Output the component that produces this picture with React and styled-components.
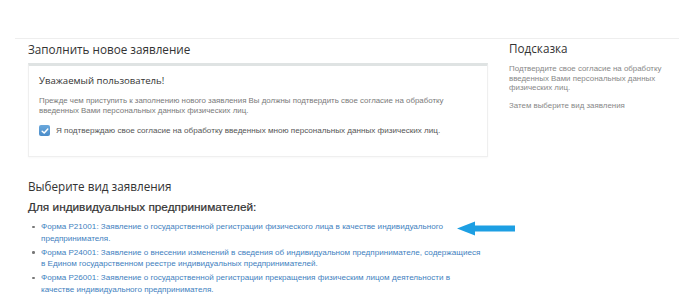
import React from "react";
import styled, { createGlobalStyle } from "styled-components";

const Global = createGlobalStyle`
  html, body { margin: 0; padding: 0; background: #fff; }
  body { font-family: "Liberation Sans", Arial, sans-serif; color: #333; }
`;

const Page = styled.div`
  margin: 38px 0 0 15px;
  border-top: 1px solid #eeeeee;
  display: flex;
  align-items: flex-start;
  gap: 21px;
  padding-left: 13px;
`;

const Main = styled.div`
  width: 460px;
  flex: none;
`;

const Side = styled.aside`
  width: 165px;
  flex: none;
`;

const Heading = styled.h2`
  margin: 0;
  font-family: "Open Sans", "Liberation Sans", sans-serif;
  font-weight: 400;
  font-size: 11.7px;
  line-height: 18px;
  color: #333;
  margin-top: ${(p) => p.$top || 0}px;
`;

const Panel = styled.section`
  margin-top: 5px;
  border: 1px solid #efefef;
  border-top: 3px solid #dfe3e3;
  padding: 8px 10px 20px 10px;
  box-shadow: 0 1px 2px rgba(0, 0, 0, 0.03);
`;

const PanelTitle = styled.div`
  font-family: "Open Sans", "Liberation Sans", sans-serif;
  font-weight: 500;
  font-size: 9.6px;
  line-height: 14px;
  color: #333;
`;

const Small = styled.p`
  margin: ${(p) => p.$mt || 0}px 0 0 0;
  font-size: 7.9px;
  line-height: 9.5px;
  color: #7a7a7a;
`;

const CheckRow = styled.label`
  display: flex;
  align-items: center;
  gap: 6px;
  margin-top: 10px;
  font-size: 8.1px;
  color: #555;
`;

const Box = styled.span`
  width: 11px;
  height: 11px;
  border-radius: 2px;
  background: linear-gradient(#6aa8dc, #4a8cc9);
  display: inline-flex;
  align-items: center;
  justify-content: center;
  flex: none;
`;

const SubHeading = styled.h3`
  margin: 5px 0 0 0;
  font-family: "Liberation Sans", Arial, sans-serif;
  font-weight: 400;
  font-size: 11.8px;
  line-height: 15px;
  color: #333;
  -webkit-text-stroke: 0.2px #333;
`;

const List = styled.ul`
  margin: 6px 0 0 0;
  padding: 0 0 0 13px;
  list-style: none;
`;

const Item = styled.li`
  position: relative;
  font-size: 8.1px;
  line-height: 11.5px;
  color: #3f7fc0;
  white-space: nowrap;
  margin-bottom: 2.5px;
  &::before {
    content: "";
    position: absolute;
    left: -9px;
    top: 4.5px;
    width: 2.5px;
    height: 2.5px;
    border-radius: 50%;
    background: #777;
  }
`;

const Link = styled.a`
  color: inherit;
  text-decoration: none;
`;

const ArrowWrap = styled.span`
  position: absolute;
  left: 416px;
  top: 0px;
`;

const SideText = styled.p`
  margin: ${(p) => p.$mt || 0}px 0 0 0;
  font-size: 7.9px;
  line-height: 9.5px;
  color: #888;
`;

export default function App() {
  return (
    <>
      <Global />
      <Page>
        <Main>
          <Heading $top={1}>Заполнить новое заявление</Heading>
          <Panel>
            <PanelTitle>Уважаемый пользователь!</PanelTitle>
            <Small $mt={8}>
              Прежде чем приступить к заполнению нового заявления Вы должны подтвердить свое согласие на обработку
              введенных Вами персональных данных физических лиц.
            </Small>
            <CheckRow>
              <Box>
                <svg width="8" height="8" viewBox="0 0 8 8">
                  <path d="M1.2 4.2 L3.2 6 L6.8 2" fill="none" stroke="#fff" strokeWidth="1.5" strokeLinecap="round" strokeLinejoin="round" />
                </svg>
              </Box>
              Я подтверждаю свое согласие на обработку введенных мною персональных данных физических лиц.
            </CheckRow>
          </Panel>
          <Heading $top={20}>Выберите вид заявления</Heading>
          <SubHeading>Для индивидуальных предпринимателей:</SubHeading>
          <List>
            <Item>
              <Link href="#">
                Форма Р21001: Заявление о государственной регистрации физического лица в качестве индивидуального
                <br />
                предпринимателя.
              </Link>
              <ArrowWrap>
                <svg width="58" height="15" viewBox="0 0 58 15">
                  <path d="M0 7.5 L18 0.5 L18 4.5 L58 4.5 L58 10.5 L18 10.5 L18 14.5 Z" fill="#1d9fe3" />
                </svg>
              </ArrowWrap>
            </Item>
            <Item>
              <Link href="#">
                Форма Р24001: Заявление о внесении изменений в сведения об индивидуальном предпринимателе, содержащиеся
                <br />
                в Едином государственном реестре индивидуальных предпринимателей.
              </Link>
            </Item>
            <Item>
              <Link href="#">
                Форма Р26001: Заявление о государственной регистрации прекращения физическим лицом деятельности в
                <br />
                качестве индивидуального предпринимателя.
              </Link>
            </Item>
          </List>
        </Main>
        <Side>
          <Heading>Подсказка</Heading>
          <SideText $mt={7}>
            Подтвердите свое согласие на обработку введенных Вами персональных данных физических лиц.
          </SideText>
          <SideText $mt={8}>Затем выберите вид заявления</SideText>
        </Side>
      </Page>
    </>
  );
}
